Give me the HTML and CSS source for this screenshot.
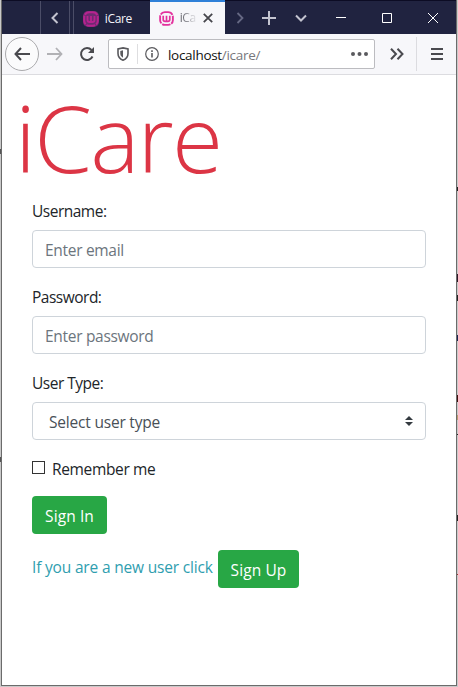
FILE: index.html
```html
<!DOCTYPE html>
<html lang="en">
<head>
<meta charset="utf-8">
<title>iCare</title>
<link rel="stylesheet" href="styles.css">
</head>
<body>
<svg width="0" height="0" class="defs">
  <symbol id="wamp" viewBox="0 0 16 16">
    <rect x="1.2" y="1.2" width="13.6" height="13.6" rx="5" fill="none" stroke="currentColor" stroke-width="2" stroke-dasharray="9 1"/>
    <path d="M4.5 5v4a2 2 0 0 0 2 2h3a2 2 0 0 0 2-2V5M8 5v5" fill="none" stroke="currentColor" stroke-width="1.8"/>
  </symbol>
</svg>
<div class="window">
  <header class="tabs">
    <div class="drag"></div>
    <div class="prev"><svg width="8" height="12" viewBox="0 0 8 12"><path d="M6.5 1 1.5 6l5 5" stroke-width="2"/></svg></div>
    <div class="gap"></div>
    <div class="tab"><svg class="logo" width="16" height="16"><use href="#wamp"/></svg><span>iCare</span></div>
    <div class="tab active"><svg class="logo" width="15" height="15"><use href="#wamp"/></svg><span>iCa</span><svg class="close" width="10" height="10" viewBox="0 0 10 10"><path d="m.8.8 8.400 8.400M9.200.8.8 9.200" stroke-width="1.800"/></svg></div>
    <div class="cell next"><svg width="8" height="12" viewBox="0 0 8 12"><path d="m1.500 1 5 5-5 5" stroke-width="1.800"/></svg></div>
    <div class="cell add"><svg width="14" height="14" viewBox="0 0 14 14"><path d="M7 0v14M0 7h14" stroke-width="2"/></svg></div>
    <div class="cell list"><svg width="12" height="8" viewBox="0 0 12 8"><path d="m1 1.500 5 5 5-5" stroke-width="2"/></svg></div>
    <div class="cell ctl"><svg width="10" height="10" viewBox="0 0 10 10"><path d="M0 4.500h10"/></svg></div>
    <div class="cell ctl"><svg width="10" height="10" viewBox="0 0 10 10"><path d="M.5.5h9v9h-9z"/></svg></div>
    <div class="cell ctl"><svg width="10" height="10" viewBox="0 0 10 10"><path d="m0 0 10 10M10 0 0 10"/></svg></div>
  </header>
  <nav class="toolbar">
    <div class="back"><svg width="16" height="14" viewBox="0 0 16 14"><path d="M7 1 1.500 7 7 13M1.500 7H16" stroke-width="2"/></svg></div>
    <svg class="fwd" width="16" height="14" viewBox="0 0 16 14"><path d="m9 1 5.500 6L9 13M14.500 7H0" stroke-width="1.800"/></svg>
    <svg class="reload" width="16" height="16" viewBox="0 0 16 16"><path d="M12.500 4A6 6 0 1 0 13.500 10.500" stroke-width="2"/><path d="M15 1v6H9z" fill="#4a4a4f" stroke="none"/></svg>
    <div class="url">
      <svg class="shield" width="12" height="14" viewBox="0 0 12 14"><path d="M6 .9 11 2v4.500c0 3.500-2 5.500-5 6.700-3-1.200-5-3.200-5-6.700V2z" stroke-width="1.600"/><path d="M6 3.300v7.400C4.200 9.600 3.300 8.500 3.300 6.500V4z" fill="#5a5a5e" stroke="none"/></svg>
      <i class="split"></i>
      <svg class="info" width="14" height="14" viewBox="0 0 14 14"><circle cx="7" cy="7" r="6.300" stroke-width="1.200"/><path d="M7 6v4.500M7 3.300v1.600" stroke-width="1.600"/></svg>
      <span class="addr">localhost<em>/icare/</em></span>
      <svg class="dots" width="17" height="4" viewBox="0 0 17 4"><g fill="#5a5a5e" stroke="none"><circle cx="2" cy="2" r="2"/><circle cx="8.500" cy="2" r="2"/><circle cx="15" cy="2" r="2"/></g></svg>
    </div>
    <svg class="more" width="14" height="12" viewBox="0 0 14 12"><path d="m1 .7 5 5.300-5 5.300M7.500.7l5 5.300-5 5.300" stroke-width="2"/></svg>
    <div class="menu"><svg width="12" height="12" viewBox="0 0 12 12"><path d="M0 1h12M0 6h12M0 11h12" stroke-width="2"/></svg></div>
  </nav>
  <main>
    <h1>iCare</h1>
    <form>
      <div class="group"><label for="user">Username:</label><input class="control" id="user" type="text" placeholder="Enter email"></div>
      <div class="group"><label for="pass">Password:</label><input class="control" id="pass" type="password" placeholder="Enter password"></div>
      <div class="group"><label>User Type:</label>
        <div class="control select"><span>Select user type</span><svg width="8" height="10" viewBox="0 0 8 10"><path d="M4 0 0 4h8zM4 10 0 6h8z" fill="#343a40" stroke="none"/></svg></div>
      </div>
      <label class="remember"><span class="box"></span><span class="text">Remember me</span></label>
      <button class="btn in" type="button">Sign In</button>
      <div class="signup"><span class="hint">If you are a new user click</span><button class="btn up" type="button">Sign Up</button></div>
    </form>
  </main>
</div>
</body>
</html>
```
FILE: styles.css
```css
* { box-sizing: border-box; }
html, body { height: 687px; overflow: hidden; }
body {
  margin: 0;
  padding: 0 1px 1px;
  background:
    linear-gradient(#222, #222) 100% 187px / 1px 4px no-repeat,
    linear-gradient(#301828, #301828) 100% 274px / 1px 8px no-repeat,
    linear-gradient(#222, #222) 100% 295px / 1px 6px no-repeat,
    linear-gradient(#1c2450, #1c2450) 100% 335px / 1px 6px no-repeat,
    linear-gradient(#401010, #401010) 100% 395px / 1px 7px no-repeat,
    linear-gradient(#b99a70, #b99a70) 100% 415px / 1px 5px no-repeat,
    linear-gradient(#222, #222) 100% 434px / 1px 1px no-repeat,
    linear-gradient(#222, #222) 100% 515px / 1px 6px no-repeat,
    linear-gradient(#a03030, #a03030) 100% 574px / 1px 1px no-repeat,
    linear-gradient(#555, #555) 0 149px / 1px 5px no-repeat,
    linear-gradient(#555, #555) 0 457px / 1px 5px no-repeat,
    #c9c9c9;
  font-family: "Open Sans", "Noto Sans", sans-serif;
  font-size: 15.5px;
  line-height: 24px;
  color: #212529;
}
.defs { display: none; }
svg { display: block; flex: none; fill: none; stroke: currentColor; }
.window {
  height: 686px;
  border: 1px solid #6b6b6b;
  border-top: 0;
  background: #fff;
}
.tabs {
  display: flex;
  height: 34px;
  background: #202340;
  border-top: 1px solid #0c0c24;
  color: #c3c4d0;
}
.drag { width: 39px; border-right: 1px solid #4b4d67; }
.prev { width: 29px; display: flex; align-items: center; justify-content: center; border-right: 1px solid #4b4d67; }
.gap { width: 4px; border-right: 1px solid #4b4d67; }
.tab {
  display: flex;
  align-items: center;
  width: 76px;
  padding: 2px 0 0 9px;
  font-size: 12px;
  color: #f4f4fa;
}
.tab span { margin-left: 6px; letter-spacing: -.4px; }
.logo { color: #b8238f; }
.tab:not(.active) .logo { background: #702a72; border-radius: 5px; }
.tab.active {
  width: 75px;
  margin-top: -1px;
  padding-top: 0;
  border-top: 2px solid #2f80d8;
  background: #f7f7fa;
}
.active .logo { color: #e3319d; }
.active span {
  width: 18px;
  margin-left: 6px;
  overflow: hidden;
  background: linear-gradient(90deg, #55555d, #f7f7fa);
  background-clip: text;
  color: transparent;
}
.close { margin-left: 5px; color: #46464c; }
.cell { display: flex; align-items: center; justify-content: center; }
.next { width: 30px; color: #666984; }
.add { width: 30px; }
.list { width: 34px; }
.ctl { width: 46px; color: #fff; }
.toolbar {
  display: flex;
  align-items: center;
  height: 41px;
  padding-left: 3px;
  background: #f7f7fa;
  border-bottom: 1px solid #dcdce0;
  color: #4a4a4f;
}
.back {
  display: flex;
  align-items: center;
  justify-content: center;
  width: 34px;
  height: 34px;
  border: 1px solid #aaaaad;
  border-radius: 50%;
  background: #fbfbfc;
}
.fwd { margin-left: 8px; color: #b1b1b5; }
.reload { margin-left: 16px; }
.url {
  display: flex;
  align-items: center;
  width: 267px;
  height: 30px;
  margin-left: 13px;
  padding-left: 8px;
  border: 1px solid #bcbcc0;
  border-radius: 2px;
  background: #fff;
  color: #5a5a5e;
}
.split { width: 1px; height: 20px; margin-left: 8px; background: #dedee0; }
.info { margin-left: 7px; }
.addr { margin-left: 9px; padding-top: 2px; font-size: 13.5px; letter-spacing: -.3px; color: #111; }
.addr em { font-style: normal; color: #77777c; }
.dots { margin: 0 6px 0 auto; }
.more { margin-left: 15px; }
.menu {
  display: flex;
  align-items: center;
  height: 34px;
  margin-left: 12px;
  padding-left: 14px;
  border-left: 1px solid #dcdce0;
}
main { padding: 0 30px; }
h1 {
  height: 123px;
  margin: 0 0 0 -17px;
  padding-top: 5px;
  font-size: 93px;
  font-weight: 300;
  line-height: 115px;
  letter-spacing: -1.8px;
  color: #dc3545;
}
.group { margin-bottom: 16px; }
.group label { display: block; height: 24px; margin-bottom: 8px; padding-top: 1px; letter-spacing: -.5px; }
.control {
  display: block;
  width: 100%;
  height: 38px;
  padding: 1px 12px 0;
  border: 1px solid #ced4da;
  border-radius: 4px;
  background: #fff;
  font: inherit;
  letter-spacing: -.3px;
  color: #495057;
}
.control::placeholder { color: #6c757d; opacity: 1; }
.select { display: flex; align-items: center; justify-content: space-between; padding: 0 12px 0 16px; letter-spacing: -.2px; }
.select span { padding-top: 1px; }
.remember { display: flex; height: 24px; margin-bottom: 16px; letter-spacing: -.35px; }
.remember .text { padding-top: 1px; }
.box { width: 13px; height: 13px; margin: 5px 7px 0 0; border: 1px solid #333; background: #fff; }
.btn {
  display: block;
  height: 38px;
  padding: 2px 0 0;
  border: 0;
  border-radius: 4px;
  background: #28a745;
  font: inherit;
  letter-spacing: .1px;
  text-align: center;
  color: #fff;
}
.in { width: 75px; margin-bottom: 16px; }
.up { width: 81px; }
.signup { display: flex; }
.hint { width: 186px; padding-top: 5px; white-space: nowrap; letter-spacing: -.18px; color: #2f9eaf; }
```
